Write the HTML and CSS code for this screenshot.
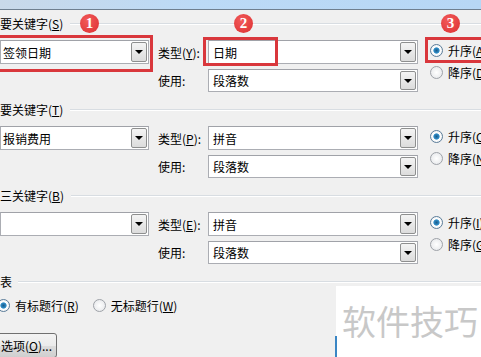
FILE: index.html
```html
<!DOCTYPE html>
<html lang="zh-CN">

<head>
    <meta charset="UTF-8">
    <title>排序</title>
    <link rel="stylesheet" href="styles.css">
</head>

<body>
    <div class="titlebar"></div>

    <div class="dialog">

        <!-- 主要关键字 -->
        <div class="group">
            <div class="header">
                <span>要关键字(<u>S</u>)</span>
                <span class="rule"></span>
                <span class="badge b1">1</span>
                <span class="badge b2">2</span>
                <span class="badge b3">3</span>
            </div>
            <div class="rows">
                <div class="combo key">
                    <span class="val">签领日期</span>
                    <span class="drop"></span>
                    <span class="mark mark1"></span>
                </div>
                <label class="lbl">类型(<u>Y</u>):</label>
                <div class="combo">
                    <span class="val">日期</span>
                    <span class="drop"></span>
                    <span class="mark mark2"></span>
                </div>
                <div class="order">
                    <div class="radio on">升序(<u>A</u>)<span class="mark mark3"></span></div>
                    <div class="radio">降序(<u>D</u>)</div>
                </div>
                <label class="lbl">使用:</label>
                <div class="combo">
                    <span class="val">段落数</span>
                    <span class="drop"></span>
                </div>
            </div>
        </div>

        <!-- 次要关键字 -->
        <div class="group">
            <div class="header">
                <span>要关键字(<u>T</u>)</span>
                <span class="rule"></span>
            </div>
            <div class="rows">
                <div class="combo key">
                    <span class="val">报销费用</span>
                    <span class="drop"></span>
                </div>
                <label class="lbl">类型(<u>P</u>):</label>
                <div class="combo">
                    <span class="val">拼音</span>
                    <span class="drop"></span>
                </div>
                <div class="order">
                    <div class="radio on">升序(<u>C</u>)</div>
                    <div class="radio">降序(<u>N</u>)</div>
                </div>
                <label class="lbl">使用:</label>
                <div class="combo">
                    <span class="val">段落数</span>
                    <span class="drop"></span>
                </div>
            </div>
        </div>

        <!-- 第三关键字 -->
        <div class="group">
            <div class="header">
                <span>三关键字(<u>B</u>)</span>
                <span class="rule"></span>
            </div>
            <div class="rows">
                <div class="combo key">
                    <span class="val"></span>
                    <span class="drop"></span>
                </div>
                <label class="lbl">类型(<u>E</u>):</label>
                <div class="combo">
                    <span class="val">拼音</span>
                    <span class="drop"></span>
                </div>
                <div class="order">
                    <div class="radio on">升序(<u>I</u>)</div>
                    <div class="radio">降序(<u>G</u>)</div>
                </div>
                <label class="lbl">使用:</label>
                <div class="combo">
                    <span class="val">段落数</span>
                    <span class="drop"></span>
                </div>
            </div>
        </div>

        <!-- 列表 -->
        <div class="header list">
            <span>表</span>
            <span class="rule"></span>
        </div>
        <div class="titles">
            <div class="radio on">有标题行(<u>R</u>)</div>
            <div class="radio">无标题行(<u>W</u>)</div>
        </div>

        <button type="button" class="options">选项(<u>O</u>)...</button>
    </div>

    <div class="watermark">软件技巧</div>
</body>

</html>
```

FILE: styles.css
```css
body {
    font-family: "Noto Sans CJK SC", "Microsoft YaHei", sans-serif;
    font-size: 12px;
    color: #000;
    background-color: #f0f0f0;
    margin: 0;
    width: 481px;
    height: 357px;
    overflow: hidden;
    position: relative;
}


.titlebar {
    height: 9px;
    background: linear-gradient(to right, #c9d9e9, #bcdaf6 40%, #b7d7f5);
    border-bottom: 1px solid #6f7f8f;
}


.dialog {
    padding-top: 6px;
}


.group {
    margin-bottom: 10px;
}


.header {
    position: relative;
    display: flex;
    align-items: center;
    height: 16px;
    line-height: 16px;
    white-space: nowrap;
}


.rule {
    flex: 1;
    margin-left: 7px;
    height: 1px;
    background-color: #d8dde2;
    border-bottom: 1px solid #fff;
}


.badge {
    position: absolute;
    top: -2px;
    width: 19px;
    height: 19px;
    border-radius: 50%;
    background: radial-gradient(circle at 40% 35%, #f25a5a, #dc2f30);
    color: #fff;
    font-family: "Liberation Serif", serif;
    font-size: 15px;
    font-weight: bold;
    line-height: 19px;
    text-align: center;
}


.b1 {
    left: 80px;
}


.b2 {
    left: 234px;
}


.b3 {
    left: 441px;
}


.rows {
    display: grid;
    grid-template-columns: 149px 59px 210px 1fr;
    grid-template-rows: 24px 23px;
    row-gap: 5px;
    margin-top: 8px;
}


.lbl {
    padding-left: 9px;
    display: flex;
    align-items: center;
}


.combo {
    position: relative;
    background-color: #fff;
    border: 1px solid #abadb3;
    border-top-color: #a0a2a8;
    display: flex;
    align-items: center;
}


.combo .val {
    padding-left: 4px;
}


.key {
    grid-row: 1;
    grid-column: 1;
}


.key .val {
    padding-left: 2px;
}


.rows .lbl:nth-of-type(2),
.rows > .combo:last-child {
    grid-row: 2;
}


.rows > .combo:last-child {
    grid-column: 3;
}


.rows .lbl:nth-of-type(2) {
    grid-column: 2;
}


.drop {
    position: absolute;
    right: 1px;
    top: 1px;
    bottom: 1px;
    width: 14px;
    border: 1px solid #8e8f8f;
    border-radius: 2px;
    background: linear-gradient(#f4f4f4, #dcdcdc);
}


.drop::after {
    content: "";
    position: absolute;
    left: 3px;
    top: 50%;
    margin-top: -2px;
    border-left: 4px solid transparent;
    border-right: 4px solid transparent;
    border-top: 4px solid #000;
}


.order {
    grid-column: 4;
    grid-row: 1 / span 2;
    padding-left: 12px;
    margin-top: -1px;
}


.radio {
    position: relative;
    display: flex;
    align-items: center;
    height: 22px;
    white-space: nowrap;
}


.radio::before {
    content: "";
    width: 11px;
    height: 11px;
    margin-right: 5px;
    border-radius: 50%;
    border: 1px solid #9ea2a8;
    background: radial-gradient(circle, #fff, #e2e4e7);
    flex: none;
}


.radio.on::before {
    background: radial-gradient(circle, #1a5b8a 0, #2f8ec9 35%, #fff 45%, #e6e8ea 100%);
    border-color: #5a7c99;
}


.mark {
    position: absolute;
    border: 3px solid #d9373c;
    pointer-events: none;
}


.mark1 {
    left: -4px;
    top: -6px;
    right: -5px;
    bottom: -9px;
}


.mark2 {
    left: -6px;
    top: -4px;
    width: 69px;
    bottom: -3px;
}


.mark3 {
    left: -5px;
    top: -2px;
    width: 60px;
    bottom: -2px;
}


.list {
    margin-top: 0;
}


.list .rule {
    margin-left: 6px;
}


.titles {
    display: flex;
    gap: 14px;
    margin-top: 4px;
    margin-left: -3px;
}


.options {
    display: block;
    margin-top: 17px;
    margin-left: -5px;
    padding: 0 4px 0 5px;
    height: 25px;
    font-family: inherit;
    font-size: 12px;
    color: #000;
    border: 1px solid #707070;
    border-radius: 3px;
    background: linear-gradient(#f3f3f3 0, #ebebeb 50%, #dddddd 51%, #cfcfcf 100%);
}


.watermark {
    position: absolute;
    left: 336px;
    top: 286px;
    width: 145px;
    height: 71px;
    box-sizing: border-box;
    padding: 15px 0 0 6px;
    background-color: #fff;
    color: #c8c8c8;
    font-size: 34px;
    line-height: 40px;
    letter-spacing: 0;
    white-space: nowrap;
}


.watermark::before {
    content: "";
    position: absolute;
    left: -1px;
    top: 50px;
    bottom: 0;
    border-left: 2px solid #3a86c4;
}
```
